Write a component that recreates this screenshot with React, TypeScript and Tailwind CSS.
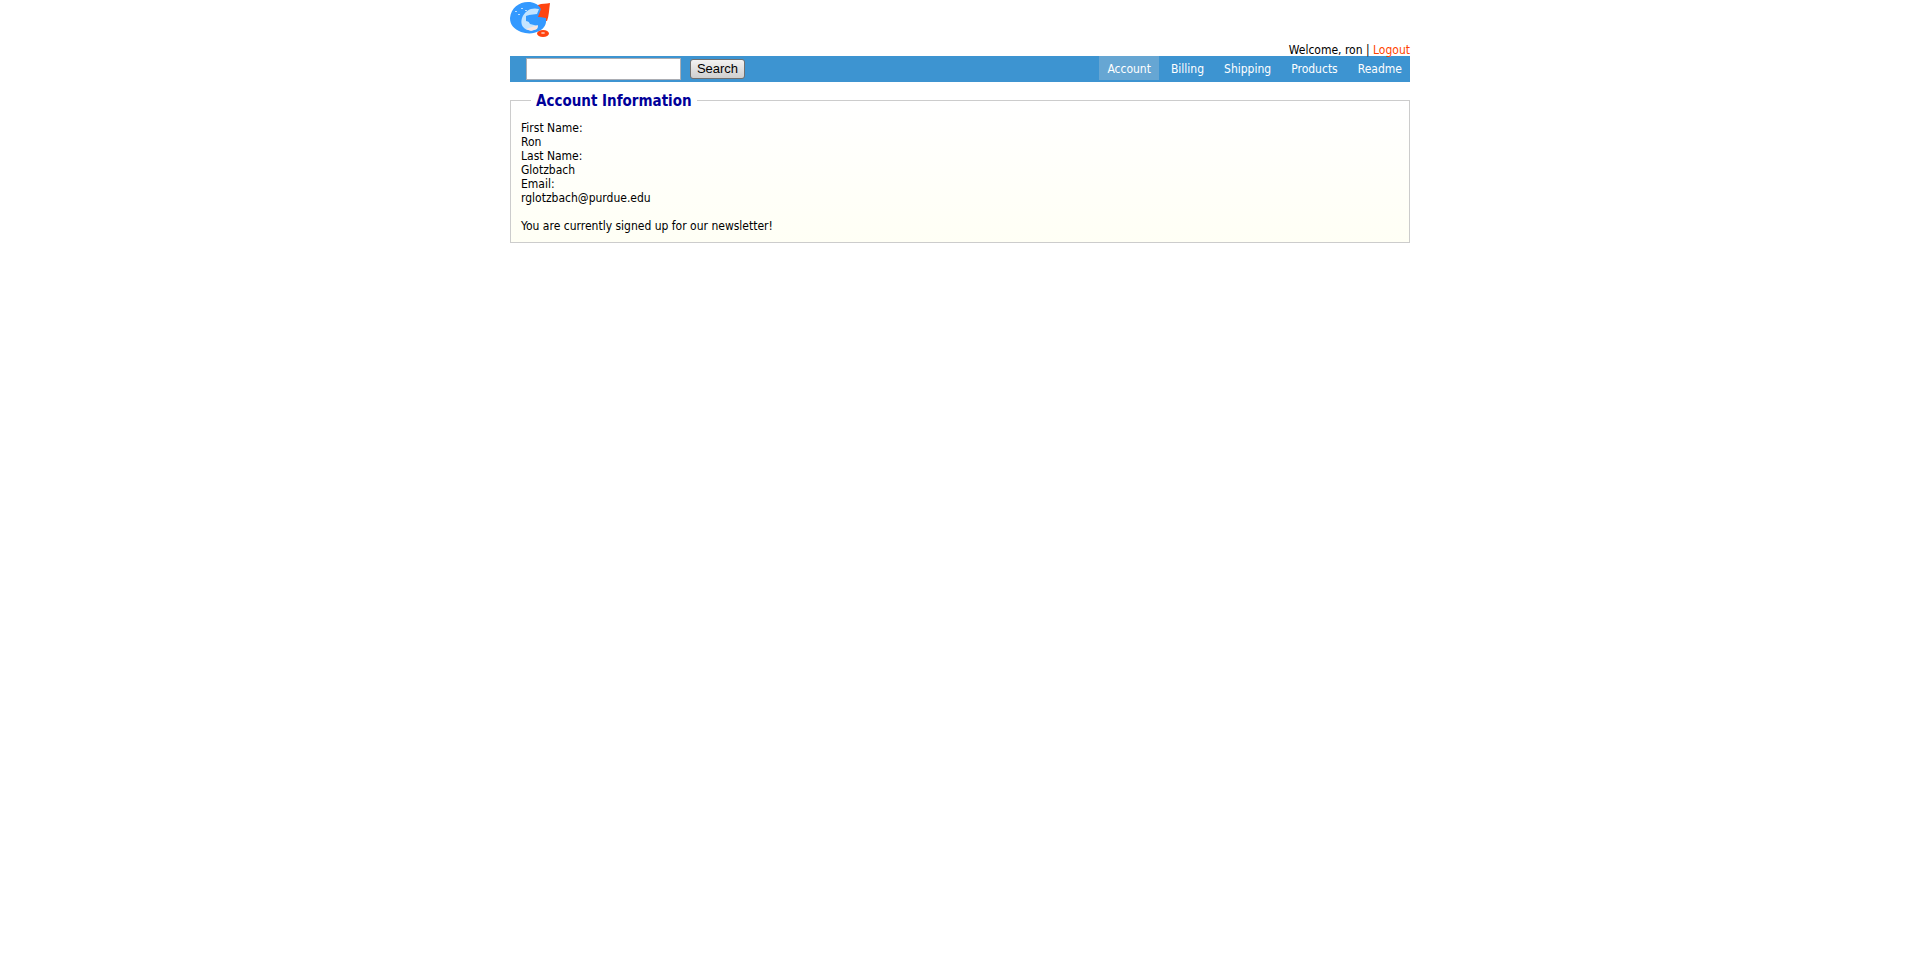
const tabs = ["Account", "Billing", "Shipping", "Products", "Readme"];

const details = [
  ["First Name:", "Ron"],
  ["Last Name:", "Glotzbach"],
  ["Email:", "rglotzbach@purdue.edu"],
];

function Logo() {
  return (
    <svg viewBox="0 0 40 36" className="h-9 w-10" role="img" aria-label="Home">
      <path d="M28 3C32 1 36 2 40 1C39 8 39 14 37 19L27 18C26 12 29 9 26 5Z" fill="#ff4410" />
      <ellipse cx="33" cy="31.500" rx="6" ry="3.500" fill="#ff4410" />
      <ellipse cx="33" cy="31" rx="2" ry="1" fill="#ffb49c" />
      <path d="M0 16C1 6 9 0 18 0C24 0 28 2 31 7L28 15L36 16C37 22 34 27 29 29C24 32 17 32 11 30C4 27 0 23 0 16Z" fill="#3399ff" />
      <path d="M29 7C22 5 15 8 12 16C10 22 13 27 18 28C23 29 28 28 28 24L20 22L17 17L19 13L27 12Z" fill="#c4e4ff" />
      <path d="M16 14C20 12 22 15 26 15L35 16L33 21L25 21C21 20 18 20 16 19Z" fill="#3399ff" />
      <path d="M16 27L28 23L27 27L21 29Z" fill="#f9e5df" />
      <path d="M5 9h2v1H5zM8 12h2v1H8zM11 6h2v1h-2zM15 8h2v1h-2z" fill="#b6dcff" />
    </svg>
  );
}

export default function App() {
  return (
    <div className="mx-auto max-w-[900px] bg-white font-['DejaVu_Sans_Condensed','DejaVu_Sans',sans-serif] text-[12px] leading-[14px] text-black">
      <header>
        <a href="#home" className="block w-10 pt-0.5">
          <Logo />
        </a>
        <p className="pt-1.5 text-right leading-3">
          Welcome, ron |{" "}
          <a href="#logout" className="text-[#ff4400]">
            Logout
          </a>
        </p>
        <div className="flex h-[26px] items-start justify-between bg-[#3d94d1]">
          <form className="flex items-center gap-[9px] pt-0.5 pl-4" onSubmit={(e) => e.preventDefault()}>
            <input
              type="text"
              aria-label="Search terms"
              className="h-[22px] w-[155px] border border-[#abadb3] bg-white px-1 outline-none"
            />
            <button
              type="submit"
              className="h-5 w-[55px] rounded-[3px] border border-[#707070] bg-linear-to-b from-[#f2f2f2] to-[#cfcfcf] font-['Liberation_Sans',Arial,sans-serif] text-[13px] leading-4"
            >
              Search
            </button>
          </form>
          <nav className="flex gap-1">
            {tabs.map((tab) => (
              <a
                key={tab}
                href={"#" + tab.toLowerCase()}
                className={
                  tab === "Account"
                    ? "h-6 bg-[#66a6d3] px-2 pt-1.5 text-white"
                    : "h-6 px-2 pt-1.5 text-white"
                }
              >
                {tab}
              </a>
            ))}
          </nav>
        </div>
      </header>
      <main className="pt-[9px]">
        <fieldset className="border border-[#cccccc] bg-linear-to-b from-white to-[#fffff5] px-2.5 pb-[9px]">
          <legend className="ml-2.5 px-[5px] pt-0.5 text-[15px] leading-4 font-bold text-[#000099]">
            Account Information
          </legend>
          <dl className="pt-3">
            {details.map(([label, value]) => (
              <div key={label}>
                <dt>{label}</dt>
                <dd>{value}</dd>
              </div>
            ))}
          </dl>
          <p className="pt-3.5">You are currently signed up for our newsletter!</p>
        </fieldset>
      </main>
    </div>
  );
}
